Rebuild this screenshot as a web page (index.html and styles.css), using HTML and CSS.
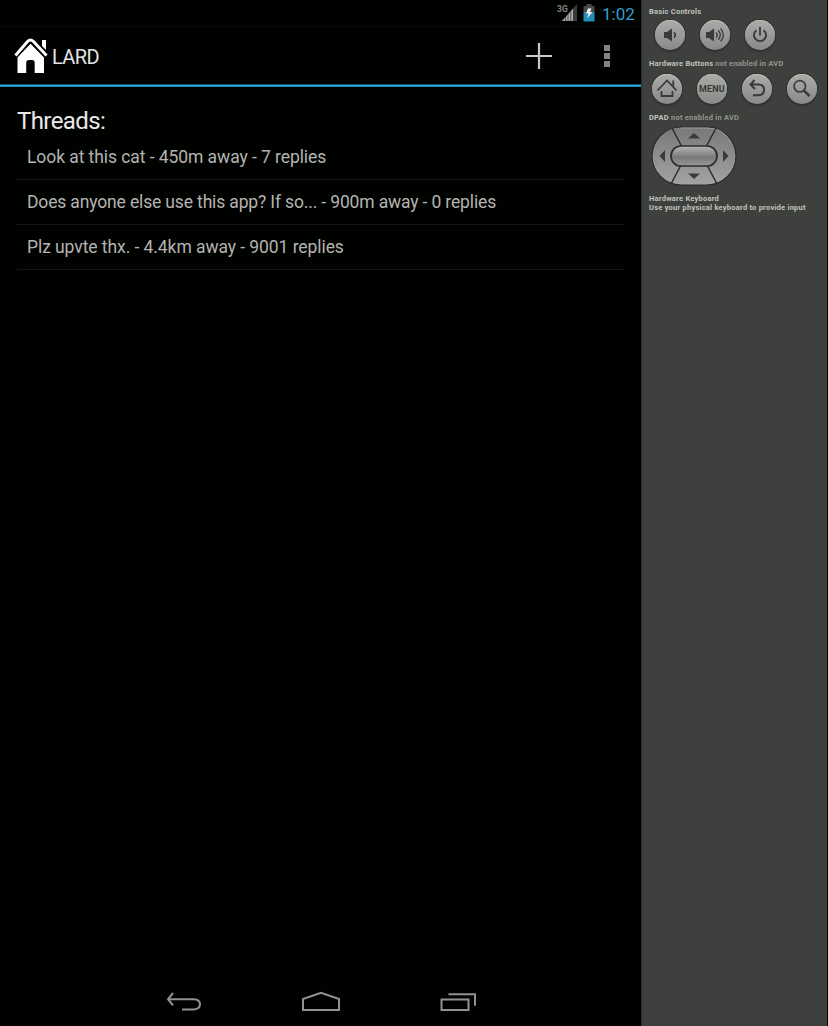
FILE: index.html
```html
<!DOCTYPE html>
<html lang="en">
<head>
<meta charset="utf-8">
<title>LARD</title>
<link rel="stylesheet" href="styles.css">
</head>
<body>
<div class="emulator">
  <main class="device">
    <div class="status-bar">
      <svg class="signal" width="20" height="20" viewBox="0 0 20 20">
        <path d="M4 18L19 1V18Z" fill="#3a3a3a"/>
        <path d="M4 18L15.5 5V18Z" fill="#a8a8a8"/>
        <path d="M7.5 13V19M10 10V19M12.7 7V19M15.5 4V19" stroke="#000" stroke-width=".5"/>
        <text class="network" x="-1" y="9">3G</text>
      </svg>
      <svg class="battery" width="12" height="18" viewBox="0 0 12 18">
        <path d="M3.5 0H8.5V2H11.5V8H.5V2H3.5Z" fill="#494949"/>
        <path d="M.5 8H11.5V17.5H.5Z" fill="#238db6"/>
        <path d="M5 4.5H8.5L7 8H9.5L4 14.5L5.5 9.5H3Z" fill="#f2f2f2"/>
      </svg>
      <span class="clock">1:02</span>
    </div>
    <header class="action-bar">
      <svg class="home-logo" width="34" height="36" viewBox="0 0 34 36">
        <path d="M28 2H32V12L28 8Z" fill="#fff"/>
        <path d="M1.5 17.5L13.5 3.5Q16.5 .5 19.5 3.5L32.5 17.5" fill="none" stroke="#fff" stroke-width="3"/>
        <path d="M3.5 19.5L16.5 5.5L30 19.5V35H20.7V25Q20.7 22 18 22H15Q12.2 22 12.2 25V35H3.5Z" fill="#fff"/>
        <path d="M3 19L16.5 5L30.5 19" fill="none" stroke="#000" stroke-width=".9"/>
      </svg>
      <h1 class="app-title">LARD</h1>
      <svg class="add" width="26" height="26" viewBox="0 0 26 26"><path d="M13 0V26M0 13H26" stroke="#c8c8c8" stroke-width="2.2"/></svg>
      <svg class="overflow" width="6" height="22" viewBox="0 0 6 22"><path d="M0 0H6V6H0ZM0 8H6V14H0ZM0 16H6V22H0Z" fill="#858287"/></svg>
    </header>
    <div class="accent"></div>
    <section class="content">
      <h2 class="heading">Threads:</h2>
      <ul class="threads">
        <li class="thread">Look at this cat - 450m away - 7 replies</li>
        <li class="thread long">Does anyone else use this app? If so... - 900m away - 0 replies</li>
        <li class="thread">Plz upvte thx. - 4.4km away - 9001 replies</li>
      </ul>
    </section>
    <nav class="nav-bar">
      <svg width="36" height="22" viewBox="0 0 36 22"><path d="M7 2L2 8.2L7 14.4M2 8.2H28Q34 8.5 34 13.3Q34 18 28 18.5H16" fill="none" stroke="#919191" stroke-width="2"/></svg>
      <svg width="40" height="22" viewBox="0 0 40 22"><path d="M2 8L20 1.8L38 8V19H2Z" fill="none" stroke="#919191" stroke-width="2"/></svg>
      <svg width="36" height="22" viewBox="0 0 36 22"><path d="M1.5 8.5H28.5V19H1.5ZM8.5 3.2H35V14.7" fill="none" stroke="#919191" stroke-width="2"/></svg>
    </nav>
  </main>
  <aside class="controls">
    <h3 class="label">Basic Controls</h3>
    <div class="row basic">
      <button class="key" aria-label="Volume down"><svg width="30" height="30" viewBox="0 0 30 30"><path d="M9 12H12L17 8.5V21.5L12 18H9Z" fill="#393b39"/><path d="M19 12.4Q21.5 15 19 17.6" fill="none" stroke="#393b39" stroke-width="1.6"/></svg></button>
      <button class="key" aria-label="Volume up"><svg width="30" height="30" viewBox="0 0 30 30"><path d="M6 12H9L14 8.5V21.5L9 18H6Z" fill="#393b39"/><path d="M16 12.4Q18.5 15 16 17.6M18.3 10.4Q22.3 15 18.3 19.6M20.7 8.5Q26 15 20.7 21.5" fill="none" stroke="#393b39" stroke-width="1.3"/></svg></button>
      <button class="key" aria-label="Power"><svg width="30" height="30" viewBox="0 0 30 30"><path d="M11.5 10.2A6 6 0 1 0 18.5 10.2M15 7V15.5" fill="none" stroke="#393b39" stroke-width="1.8"/></svg></button>
    </div>
    <h3 class="label">Hardware Buttons <span class="muted">not enabled in AVD</span></h3>
    <div class="row hardware">
      <button class="key" aria-label="Home"><svg width="30" height="30" viewBox="0 0 30 30"><path d="M5.5 16.5L15 6.5L24.5 16.5M21.3 12.5V6.5M9.5 17V22H20.5V17" fill="none" stroke="#393b39" stroke-width="1.8"/></svg></button>
      <button class="key menu">MENU</button>
      <button class="key" aria-label="Back"><svg width="30" height="30" viewBox="0 0 30 30"><path d="M12.5 6L8.5 10.5L13 15M8.5 10.5H17Q22 10.8 22 15.6Q22 20.8 17 21.3H11" fill="none" stroke="#393b39" stroke-width="2"/></svg></button>
      <button class="key" aria-label="Search"><svg width="30" height="30" viewBox="0 0 30 30"><circle cx="12.8" cy="12.3" r="5.7" fill="none" stroke="#393b39" stroke-width="1.7"/><path d="M16.8 16.3L22.5 22" stroke="#393b39" stroke-width="2.5"/></svg></button>
    </div>
    <h3 class="label">DPAD <span class="muted">not enabled in AVD</span></h3>
    <svg class="dpad" width="86" height="60" viewBox="0 0 86 60">
      <defs>
        <linearGradient id="pad" x1="0" y1="0" x2="0" y2="1"><stop offset="0" stop-color="#777977"/><stop offset="1" stop-color="#a2a4a2"/></linearGradient>
        <linearGradient id="center" x1="0" y1="0" x2="0" y2="1"><stop offset="0" stop-color="#b5b7b5"/><stop offset=".45" stop-color="#858785"/><stop offset=".55" stop-color="#777977"/><stop offset="1" stop-color="#969896"/></linearGradient>
      </defs>
      <rect x="1" y="1" width="84" height="58" rx="29" fill="url(#pad)" stroke="#2b2d2b" stroke-width="1.2"/>
      <path d="M30 2H56Q73 2 80 17" fill="none" stroke="#a9aba9" stroke-width=".7"/>
      <path d="M21 2L31 21M65 2L55 21M30 39L20 58M56 39L66 58" stroke="#2b2d2b" stroke-width="1.5"/>
      <rect x="20" y="20" width="46" height="20" rx="10" fill="url(#center)" stroke="#2b2d2b" stroke-width="1.7"/>
      <path d="M37 12.5L43 7L49 12.5ZM37 47.5L43 53L49 47.5ZM14 24L8.5 30L14 36ZM72 24L77.5 30L72 36Z" fill="#393b39"/>
    </svg>
    <p class="label keyboard">Hardware Keyboard<br>Use your physical keyboard to provide input</p>
  </aside>
</div>
</body>
</html>
```
FILE: styles.css
```css
* { box-sizing: border-box; }
body { margin: 0; background: #000; font-family: Roboto, sans-serif; }
h1, h2, h3, p, ul { margin: 0; padding: 0; font-weight: 400; }
svg { display: block; flex: none; }

.emulator { display: flex; width: 828px; height: 1026px; }
.device { display: flex; flex-direction: column; width: 641px; background: #000200; }

.status-bar { display: flex; height: 27px; padding: 3px 7px 0 0; justify-content: flex-end; border-bottom: 1px solid #080a08; }
.signal { margin-right: 5px; overflow: visible; }
.network { font: 700 8.5px Roboto, sans-serif; fill: #858585; stroke: #000; stroke-width: 1px; paint-order: stroke; }
.battery { margin: 1px 7px 0 0; }
.clock { width: 32px; color: #309fcb; font-size: 17px; line-height: 23px; white-space: nowrap; }

.action-bar { display: flex; align-items: center; height: 57px; padding: 1px 31px 0 14px; }
.home-logo { margin-right: 4px; }
.app-title { flex: 1; color: #e5e3e7; font-size: 20px; line-height: 24px; letter-spacing: -.6px; padding-top: 2px; }
.add { margin-right: 52px; }
.accent { height: 3px; background: linear-gradient(#135069 0 1px, #2eaeda 1px 2px, #2488ad 2px); }

.content { flex: 1; padding: 19px 17px 0; }
.heading { color: #eae8ec; font-size: 24px; line-height: 30px; letter-spacing: -.6px; }
.threads { margin-top: -1px; list-style: none; }
.thread { height: 45px; padding-left: 10px; border-bottom: 1px solid #151714; color: #b5b3b1; font-size: 17.5px; line-height: 45px; letter-spacing: -.07px; white-space: nowrap; }
.long { letter-spacing: -.15px; }

.nav-bar { display: flex; justify-content: space-between; height: 36px; padding: 1px 165px 0 166px; }

.controls { width: 186px; padding: 7px 0 0 7px; background: #3e403d; border-left: 1px solid #2b2d2a; }
.label { color: #c0c2be; font-size: 7.5px; font-weight: 700; line-height: 9px; letter-spacing: .23px; white-space: nowrap; }
.muted { color: #929490; }
.row { display: flex; gap: 15px; }
.basic { padding: 4px 0 0 6px; height: 43px; }
.hardware { padding: 6px 0 0 3px; height: 45px; }
.key { display: block; width: 30px; height: 30px; padding: 0; border: 0; border-radius: 50%; background: linear-gradient(#a9aba8, #888a87); box-shadow: 0 0 0 1px #303230, 0 2px 2px #303230, inset 0 1px 0 #bbbdb9; }
.menu { color: #393b39; font: 700 9px Roboto, sans-serif; letter-spacing: .15px; }
.dpad { margin: 4px 0 0 2px; }
.keyboard { margin-top: 8px; }
```
